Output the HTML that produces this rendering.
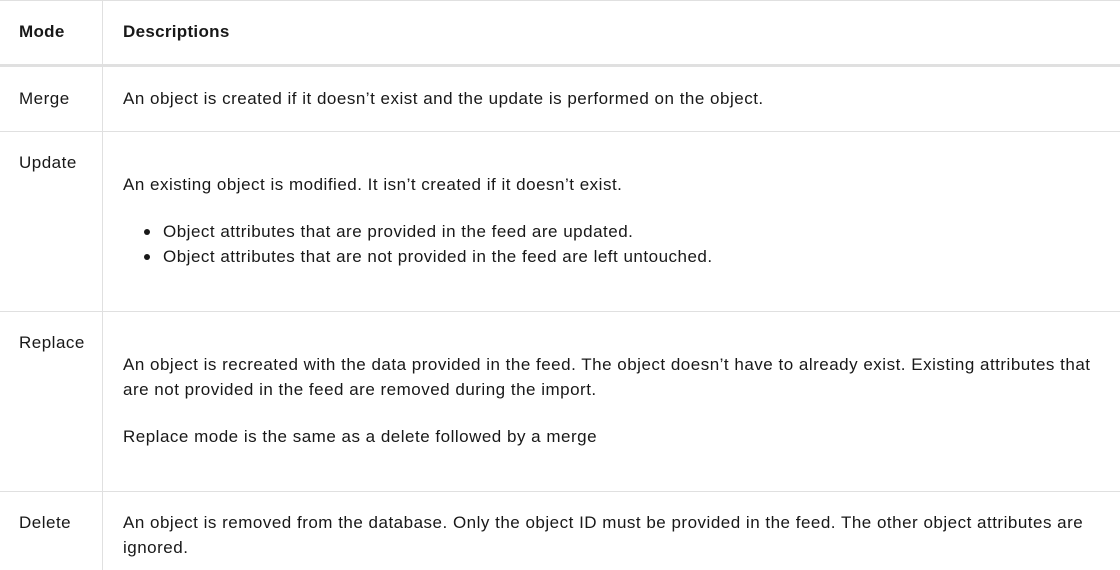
<!DOCTYPE html>
<html><head><style>
body{margin:0;width:1120px;height:570px;overflow:hidden;background:#fff;font-family:"Liberation Sans",sans-serif;color:#181818;font-size:17px;letter-spacing:0.5px;}
.t{position:absolute;white-space:nowrap;line-height:20px;}
.h{position:absolute;background:#e0e0e0;}
.b{font-weight:bold;letter-spacing:0.3px;}
.dot{position:absolute;width:6px;height:6px;border-radius:50%;background:#181818;}
</style></head><body>
<div class="h" style="left:0;top:0;width:1120px;height:1px"></div>
<div class="h" style="left:0;top:64px;width:1120px;height:3px"></div>
<div class="h" style="left:0;top:131px;width:1120px;height:1px"></div>
<div class="h" style="left:0;top:311px;width:1120px;height:1px"></div>
<div class="h" style="left:0;top:491px;width:1120px;height:1px"></div>
<div class="h" style="left:102px;top:0;width:1px;height:570px"></div>

<div class="t b" style="left:19px;top:22px">Mode</div>
<div class="t b" style="left:123px;top:22px">Descriptions</div>

<div class="t" style="left:19px;top:89px">Merge</div>
<div class="t" style="left:123px;top:89px">An object is created if it doesn’t exist and the update is performed on the object.</div>

<div class="t" style="left:19px;top:153px">Update</div>
<div class="t" style="left:123px;top:175px">An existing object is modified. It isn’t created if it doesn’t exist.</div>
<div class="dot" style="left:144px;top:229px"></div>
<div class="t" style="left:163px;top:222px">Object attributes that are provided in the feed are updated.</div>
<div class="dot" style="left:144px;top:254px"></div>
<div class="t" style="left:163px;top:247px">Object attributes that are not provided in the feed are left untouched.</div>

<div class="t" style="left:19px;top:333px">Replace</div>
<div class="t" style="left:123px;top:355px">An object is recreated with the data provided in the feed. The object doesn’t have to already exist. Existing attributes that</div>
<div class="t" style="left:123px;top:380px">are not provided in the feed are removed during the import.</div>
<div class="t" style="left:123px;top:427px">Replace mode is the same as a delete followed by a merge</div>

<div class="t" style="left:19px;top:513px">Delete</div>
<div class="t" style="left:123px;top:513px">An object is removed from the database. Only the object ID must be provided in the feed. The other object attributes are</div>
<div class="t" style="left:123px;top:538px">ignored.</div>
</body></html>
